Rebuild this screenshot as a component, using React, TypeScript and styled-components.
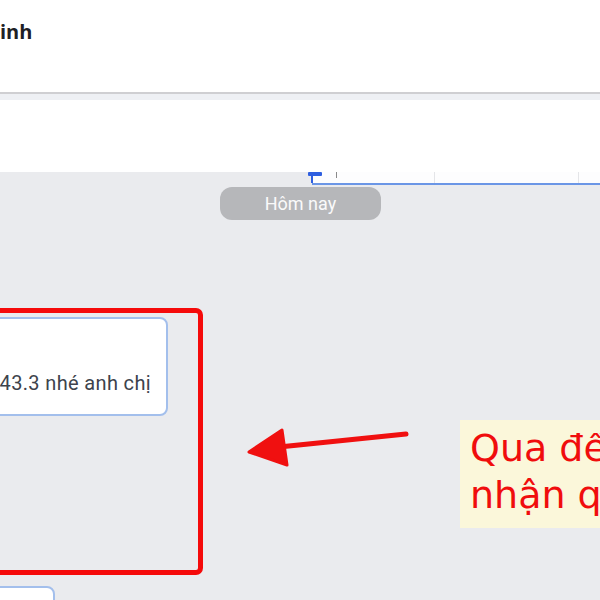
import React from 'react';
import styled, { createGlobalStyle } from 'styled-components';

const GlobalStyle = createGlobalStyle`
	html, body {
		margin: 0;
		padding: 0;
		background: #ffffff;
	}
	#root {
		width: 600px;
		height: 600px;
	}
`;

export default function App() {
	return (
		<>
			<GlobalStyle />
			<Page>
				<Header>
					<HeaderTitle>inh</HeaderTitle>
				</Header>
				<HeaderBand />
				<Composer />
				<ChatArea>
					<Toolbar>
						<ToolbarMarker />
						<ToolbarTick />
						<ToolbarCell />
						<ToolbarCell />
					</Toolbar>
					<DayPill>Hôm nay</DayPill>
					<Bubble $top={97} $height={99}>
						<BubbleText>43.3 nhé anh chị</BubbleText>
					</Bubble>
					<Bubble $top={170} $height={40} $right={545} />
					<Highlight />
					<Arrow viewBox="0 0 170 50" width="170" height="50">
						<line x1="157" y1="4" x2="30" y2="17" stroke="#f01010" strokeWidth="5" strokeLinecap="round" />
						<path d="M0 22 L33 0 L38 35 Z" fill="#f01010" stroke="#f01010" strokeWidth="3" strokeLinejoin="round" />
					</Arrow>
					<Callout>
						Qua đến đây
						<br />
						nhận quà tặng
					</Callout>
				</ChatArea>
			</Page>
		</>
	);
}

const Page = styled.div`
	display: flex;
	flex-direction: column;
	width: 600px;
	height: 600px;
	overflow: hidden;
	background: #ffffff;

	& > * {
		flex-shrink: 0;
	}
`;
const Header = styled.div`
	display: flex;
	align-items: flex-start;
	height: 94px;
	border-bottom: 2px solid #cfcfd2;
	box-sizing: border-box;
`;
const HeaderTitle = styled.h1`
	margin: 18px 0 0 0;
	font-family: 'Open Sans', sans-serif;
	font-size: 20px;
	font-weight: 700;
	color: #1d2024;
	line-height: 28px;
`;
const HeaderBand = styled.div`
	height: 6px;
	background: #eef0f4;
`;
const Composer = styled.div`
	height: 72px;
	background: #ffffff;
`;
const ChatArea = styled.div`
	position: relative;
	flex: 1 0 auto;
	display: flex;
	flex-direction: column;
	background: #eaebee;
`;
const Toolbar = styled.div`
	position: relative;
	display: flex;
	align-items: stretch;
	height: 13px;
	margin-left: 312px;
	background: #fdfdfe;
	border-bottom: 2px solid #6b96e6;
	box-sizing: border-box;
`;
const ToolbarMarker = styled.div`
	position: absolute;
	left: -4px;
	top: 0;
	width: 14px;
	height: 4px;
	background: #2f5fe0;
	border-radius: 1px;

	&::after {
		content: '';
		position: absolute;
		left: 3px;
		top: 3px;
		width: 2px;
		height: 8px;
		background: #2f5fe0;
	}
`;
const ToolbarTick = styled.div`
	width: 24px;
	border-right: 1px solid #8a8a8a;
	height: 6px;
`;
const ToolbarCell = styled.div`
	width: 97px;
	border-right: 1px solid #e4e5e8;
	&:last-child {
		width: 143px;
	}
`;
const DayPill = styled.div`
	align-self: flex-start;
	margin: 2px 0 0 220px;
	width: 161px;
	height: 33px;
	border-radius: 12px;
	background: #b6b7ba;
	color: #fafafa;
	font-family: Roboto, 'Liberation Sans', sans-serif;
	font-size: 18px;
	font-weight: 400;
	display: flex;
	align-items: center;
	justify-content: center;
`;
const Bubble = styled.div<{ $top: number; $height: number; $right?: number }>`
	display: flex;
	justify-content: flex-end;
	align-items: flex-start;
	flex-shrink: 0;
	margin-top: ${(p) => p.$top}px;
	margin-left: -200px;
	margin-right: ${(p) => p.$right ?? 432}px;
	height: ${(p) => p.$height}px;
	box-sizing: border-box;
	padding: 51px 15px 0 0;
	background: #ffffff;
	border: 2px solid #a3bfec;
	border-radius: 8px;
`;
const BubbleText = styled.span`
	font-family: Roboto, 'Liberation Sans', sans-serif;
	font-size: 20px;
	line-height: 26px;
	letter-spacing: 0.35px;
	color: #3d434c;
	white-space: nowrap;
`;
const Highlight = styled.div`
	position: absolute;
	left: -20px;
	top: 136px;
	width: 223px;
	height: 267px;
	box-sizing: border-box;
	border: 5.5px solid #f50a0a;
	border-radius: 7px;
`;
const Arrow = styled.svg`
	position: absolute;
	left: 249px;
	top: 258px;
	overflow: visible;
`;
const Callout = styled.div`
	position: absolute;
	left: 460px;
	top: 248px;
	width: 260px;
	height: 108px;
	box-sizing: border-box;
	padding: 5px 0 0 10px;
	background: #fbf7da;
	color: #f00d0d;
	font-family: 'DejaVu Sans', Verdana, sans-serif;
	font-size: 38px;
	line-height: 47px;
	white-space: nowrap;
`;
